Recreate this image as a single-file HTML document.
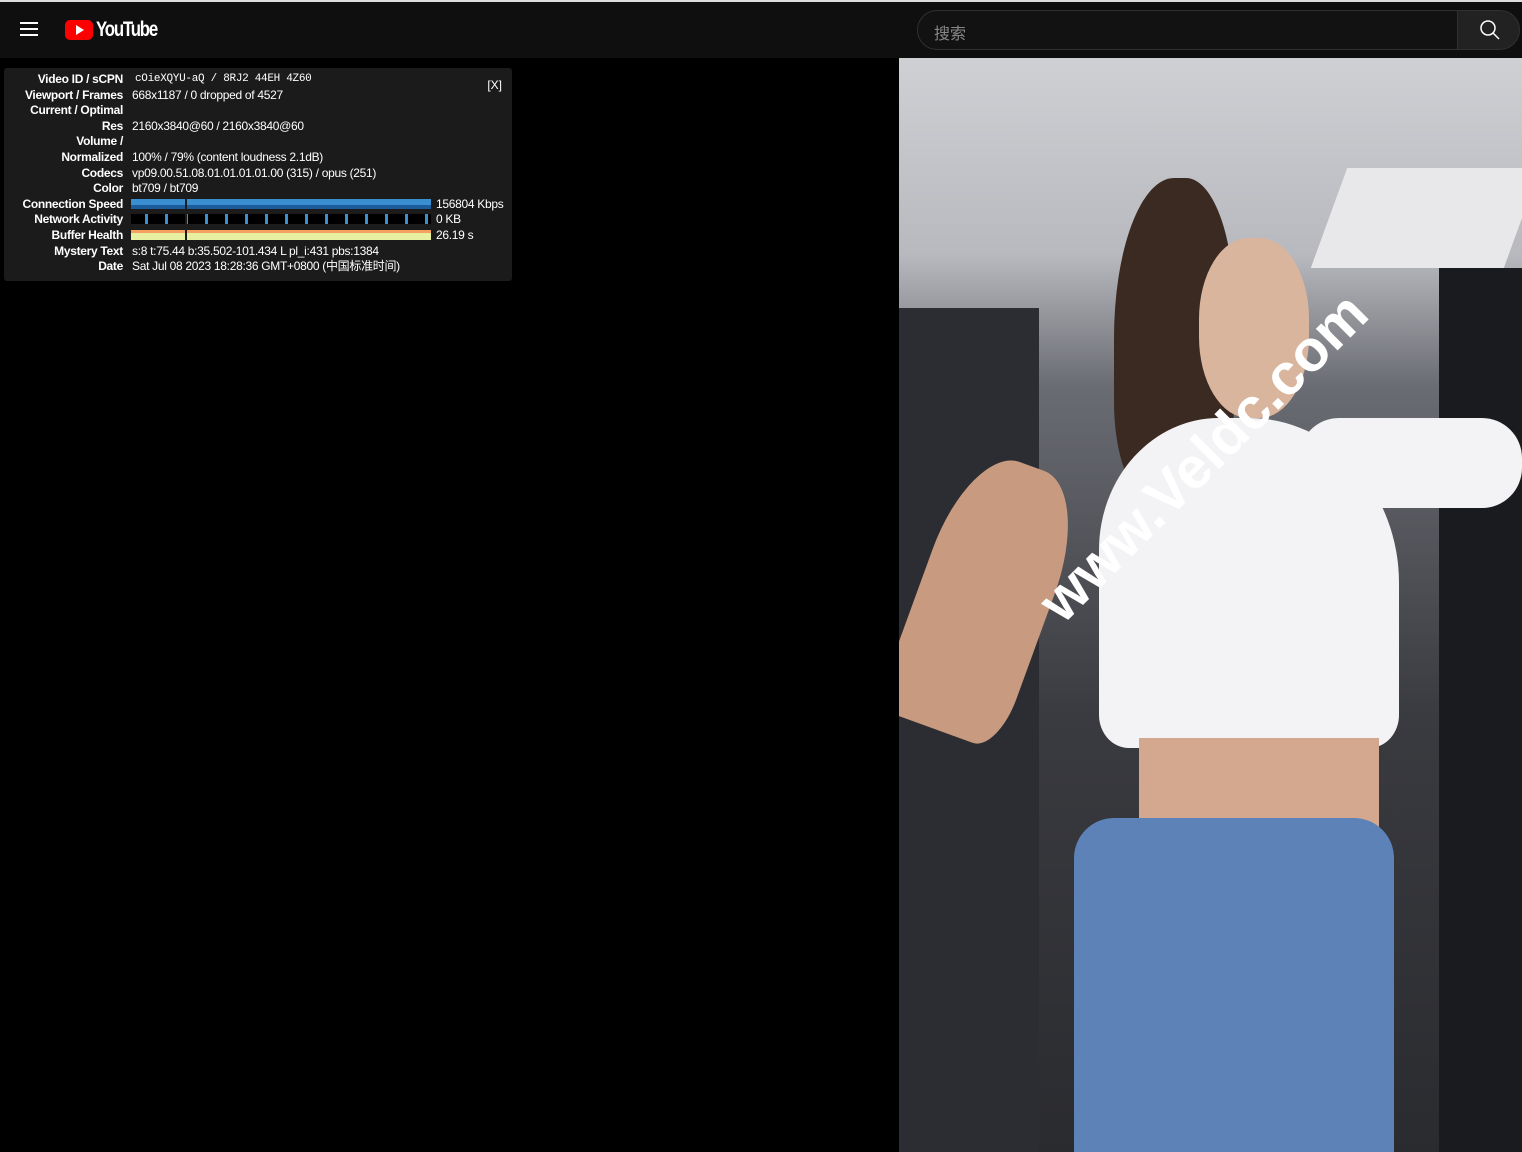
<!DOCTYPE html>
<html><head><meta charset="utf-8"><style>
*{margin:0;padding:0;box-sizing:border-box}
body{width:1522px;height:1152px;background:#000;overflow:hidden;position:relative;font-family:"Liberation Sans","Noto Sans CJK SC",sans-serif}
.top{position:absolute;left:0;top:0;width:1522px;height:58px;background:#0f0f0f;border-top:2px solid #ddd}
.search{position:absolute;left:917px;top:8px;width:541px;height:40px;border:1px solid #303030;border-radius:20px 0 0 20px;background:#121212;color:#888;font-size:16px;padding:9px 16px}
.sbtn{position:absolute;left:1457px;top:8px;width:63px;height:40px;border:1px solid #303030;border-radius:0 20px 20px 0;background:#222}
.panel{position:absolute;left:4px;top:68px;width:508px;height:213px;background:rgba(28,28,28,.95);border-radius:3px;color:#fff;font-size:12px}
.r{position:absolute;left:0;height:15px;line-height:15px;white-space:nowrap;letter-spacing:-0.3px}
.l{position:absolute;right:389px;font-weight:bold;text-align:right;width:130px}
.v{position:absolute;left:128px}
.photo{position:absolute;left:899px;top:58px;width:623px;height:1094px;overflow:hidden;background:linear-gradient(180deg,#cfd0d4 0%,#b8b9be 18%,#6a6c73 30%,#3a3b40 60%,#2a2b2f 100%)}
</style></head><body>
<div class="top">
 <div style="position:absolute;left:20px;top:20px;width:18px;height:2px;background:#fff;box-shadow:0 6px #fff,0 12px #fff"></div>
 <div style="position:absolute;left:65px;top:18px;width:28px;height:20px;background:#f00;border-radius:5px"></div>
 <div style="position:absolute;left:76px;top:23px;width:0;height:0;border-left:8px solid #fff;border-top:5px solid transparent;border-bottom:5px solid transparent"></div>
 <div style="position:absolute;left:96px;top:16px;color:#fff;font-size:21px;font-weight:bold;letter-spacing:-1.5px;transform:scaleX(.8);transform-origin:left">YouTube</div>
 <div class="search">搜索</div>
 <div class="sbtn"><svg width="63" height="38" viewBox="0 0 63 38"><circle cx="30" cy="17" r="7" fill="none" stroke="#fff" stroke-width="1.5"/><path d="M35 22l6 6" stroke="#fff" stroke-width="1.5"/></svg></div>
</div>
<div class="panel">
 <div style="position:absolute;right:10px;top:10px">[X]</div>
 <div class="r" style="top:4px;width:508px"><span class="l">Video ID / sCPN</span><span class="v" style="font-family:'Liberation Mono',monospace;left:131px;font-size:11px">cOieXQYU-aQ / 8RJ2 44EH 4Z60</span></div>
 <div class="r" style="top:20px;width:508px"><span class="l">Viewport / Frames</span><span class="v">668x1187 / 0 dropped of 4527</span></div>
 <div class="r" style="top:35px;width:508px"><span class="l">Current / Optimal</span></div>
 <div class="r" style="top:51px;width:508px"><span class="l">Res</span><span class="v">2160x3840@60 / 2160x3840@60</span></div>
 <div class="r" style="top:66px;width:508px"><span class="l">Volume /</span></div>
 <div class="r" style="top:82px;width:508px"><span class="l">Normalized</span><span class="v">100% / 79% (content loudness 2.1dB)</span></div>
 <div class="r" style="top:98px;width:508px"><span class="l">Codecs</span><span class="v">vp09.00.51.08.01.01.01.01.00 (315) / opus (251)</span></div>
 <div class="r" style="top:113px;width:508px"><span class="l">Color</span><span class="v">bt709 / bt709</span></div>
 <div class="r" style="top:129px;width:508px"><span class="l">Connection Speed</span><span class="v" style="left:432px">156804 Kbps</span></div>
 <div style="position:absolute;left:127px;top:131px;width:300px;height:10px;background:linear-gradient(#3a8fd0 60%,#1c5c9a 60%)"></div>
 <div class="r" style="top:144px;width:508px"><span class="l">Network Activity</span><span class="v" style="left:432px">0 KB</span></div>
 <div style="position:absolute;left:127px;top:146px;width:300px;height:10px;background:repeating-linear-gradient(90deg,#000 0 14px,#3a8fd0 14px 17px,#000 17px 20px)"></div>
 <div class="r" style="top:160px;width:508px"><span class="l">Buffer Health</span><span class="v" style="left:432px">26.19 s</span></div>
 <div style="position:absolute;left:127px;top:162px;width:300px;height:10px;background:linear-gradient(#f4a060 30%,#e6f0a0 30%)"></div>
 <div style="position:absolute;left:181px;top:130px;width:2px;height:45px;background:#1c1c1c"></div>
 <div class="r" style="top:176px;width:508px"><span class="l">Mystery Text</span><span class="v">s:8 t:75.44 b:35.502-101.434 L pl_i:431 pbs:1384</span></div>
 <div class="r" style="top:191px;width:508px"><span class="l">Date</span><span class="v">Sat Jul 08 2023 18:28:36 GMT+0800 (中国标准时间)</span></div>
</div>
<div class="photo">
 <div style="position:absolute;left:0;top:250px;width:140px;height:844px;background:#2c2d33"></div>
 <div style="position:absolute;left:430px;top:110px;width:193px;height:100px;background:#e8e8ea;transform:skewX(-20deg)"></div>
 <div style="position:absolute;left:540px;top:210px;width:83px;height:884px;background:#1a1b1e"></div>
 <div style="position:absolute;left:215px;top:120px;width:120px;height:320px;background:#3a2a22;border-radius:50% 40% 30% 30%"></div>
 <div style="position:absolute;left:300px;top:180px;width:110px;height:180px;background:#d9b59d;border-radius:45%"></div>
 <div style="position:absolute;left:20px;top:400px;width:130px;height:280px;background:#c89a80;border-radius:40% 40% 20% 20%;transform:rotate(20deg)"></div>
 <div style="position:absolute;left:200px;top:360px;width:300px;height:330px;background:#f3f2f4;border-radius:40% 50% 10% 10%"></div>
 <div style="position:absolute;left:400px;top:360px;width:223px;height:90px;background:#f3f2f4;border-radius:40px"></div>
 <div style="position:absolute;left:240px;top:680px;width:240px;height:110px;background:#d4a88e"></div>
 <div style="position:absolute;left:175px;top:760px;width:320px;height:334px;background:#5d82b8;border-radius:40px 40px 0 0"></div>
 <div style="position:absolute;left:150px;top:520px;color:#fff;font-size:58px;font-weight:bold;transform:rotate(-45deg);transform-origin:left;white-space:nowrap">www.Veldc.com</div>
</div>
</body></html>
